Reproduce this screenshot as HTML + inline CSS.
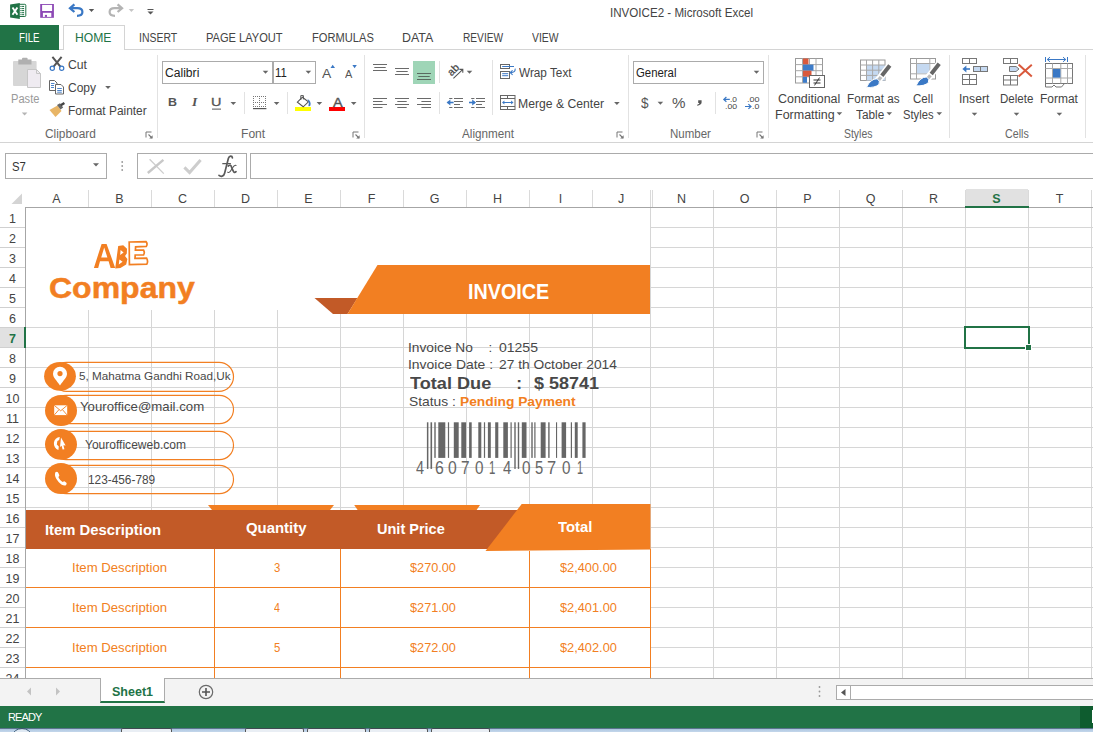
<!DOCTYPE html>
<html><head><meta charset="utf-8"><title>INVOICE2 - Microsoft Excel</title>
<style>
*{box-sizing:border-box;margin:0;padding:0}
html,body{width:1093px;height:732px;overflow:hidden;background:#fff;font-family:"Liberation Sans",sans-serif}
#app{position:relative;width:1093px;height:732px;overflow:hidden;background:#fff;color:#444;font-size:12px}
.a{position:absolute}
.t{position:absolute;white-space:pre;line-height:1;color:#444}
.sep{position:absolute;width:1px;background:#e2e2e2}
.box{position:absolute;border:1px solid #ababab;background:#fff}
svg{position:absolute;overflow:visible}
.ch{position:absolute;top:189px;height:19px;line-height:20px;text-align:center;font-size:12.5px;color:#444}
.rh{position:absolute;left:0;width:25px;height:20px;line-height:23px;text-align:center;font-size:12.5px;color:#444}

</style></head><body><div id="app">
<svg class="a" style="left:0;top:0" width="1093" height="150" viewBox="0 0 1093 150"><rect x="18" y="4.3" width="7.8" height="12.2" rx="1" fill="#fff" stroke="#217346" stroke-width="1"/><rect x="20.4" y="5.9" width="1.2" height="1.1" fill="#217346"/><rect x="22.1" y="5.9" width="2" height="1.1" fill="#217346"/><rect x="20.4" y="8.0" width="1.2" height="1.1" fill="#217346"/><rect x="22.1" y="8.0" width="2" height="1.1" fill="#217346"/><rect x="20.4" y="10.0" width="1.2" height="1.1" fill="#217346"/><rect x="22.1" y="10.0" width="2" height="1.1" fill="#217346"/><rect x="20.4" y="12.1" width="1.2" height="1.1" fill="#217346"/><rect x="22.1" y="12.1" width="2" height="1.1" fill="#217346"/><rect x="20.4" y="14.1" width="1.2" height="1.1" fill="#217346"/><rect x="22.1" y="14.1" width="2" height="1.1" fill="#217346"/><polygon points="10.1,4.6 19.8,3 19.8,18.9 10.1,17.6" fill="#217346"/><path d="M12.5 7.4 L17.4 14.8 M17.4 7.4 L12.5 14.8" stroke="#fff" stroke-width="1.9" fill="none"/><rect x="40.2" y="4" width="13.7" height="13.8" fill="#8c48b5"/><rect x="42.1" y="4.9" width="10" height="6.1" fill="#fff"/><rect x="42.9" y="12.8" width="8.4" height="4.1" fill="#fff"/><rect x="44.9" y="14.9" width="2.1" height="2" fill="#8c48b5"/><path d="M74.4 4.4 L70 8.2 L74.4 12" fill="none" stroke="#3a78c5" stroke-width="2.3" stroke-linejoin="miter"/><path d="M70.6 8.2 H77.4 C80.6 8.2 82.4 10 82.4 12 C82.4 14.4 80.4 15.8 77 15.8" fill="none" stroke="#3a78c5" stroke-width="2.2"/><polygon points="88.8,9.0 94.2,9.0 91.5,12.0" fill="#555"/><path d="M117.6 4.4 L122 8.2 L117.6 12" fill="none" stroke="#b4b4b4" stroke-width="2.3" stroke-linejoin="miter"/><path d="M121.4 8.2 H114.6 C111.4 8.2 109.6 10 109.6 12 C109.6 14.4 111.6 15.8 115 15.8" fill="none" stroke="#b4b4b4" stroke-width="2.2"/><polygon points="128.7,9.0 134.1,9.0 131.4,12.0" fill="#c6c6c6"/><rect x="147.5" y="9" width="6" height="1" fill="#555"/><polygon points="147.5,11.5 153.5,11.5 150.5,14.5" fill="#555"/></svg><div class="t" style="left:610.03px;top:7.00px;font-size:12px;color:#444;transform:scaleX(0.9663);transform-origin:0 0">INVOICE2 - Microsoft Excel</div>
<div class="a" style="left:0;top:25px;width:59px;height:25px;background:#217346"></div>
<div class="a" style="left:59px;top:49px;width:1034px;height:1px;background:#d4d4d4"></div>
<div class="a" style="left:63px;top:25px;width:62px;height:25px;background:#fff;border:1px solid #d4d4d4;border-bottom:0"></div>
<div class="t" style="left:19.20px;top:32.00px;font-size:12px;color:#fff;transform:scaleX(0.8094);transform-origin:0 0">FILE</div>
<div class="t" style="left:75.30px;top:32.00px;font-size:12px;color:#217346;transform:scaleX(1.0116);transform-origin:0 0">HOME</div>
<div class="t" style="left:139.03px;top:32.00px;font-size:12px;color:#444;transform:scaleX(0.8724);transform-origin:0 0">INSERT</div>
<div class="t" style="left:206.29px;top:32.00px;font-size:12px;color:#444;transform:scaleX(0.9245);transform-origin:0 0">PAGE LAYOUT</div>
<div class="t" style="left:312.39px;top:32.00px;font-size:12px;color:#444;transform:scaleX(0.9271);transform-origin:0 0">FORMULAS</div>
<div class="t" style="left:402.38px;top:32.00px;font-size:12px;color:#444;transform:scaleX(1.0333);transform-origin:0 0">DATA</div>
<div class="t" style="left:462.67px;top:32.00px;font-size:12px;color:#444;transform:scaleX(0.8463);transform-origin:0 0">REVIEW</div>
<div class="t" style="left:532.05px;top:32.00px;font-size:12px;color:#444;transform:scaleX(0.8634);transform-origin:0 0">VIEW</div>
<div class="a" style="left:0;top:142px;width:1093px;height:1px;background:#d4d4d4"></div>
<div class="sep" style="left:157px;top:55px;height:83px"></div>
<div class="sep" style="left:364px;top:55px;height:83px"></div>
<div class="sep" style="left:492px;top:60px;height:55px"></div>
<div class="sep" style="left:628px;top:55px;height:83px"></div>
<div class="sep" style="left:768px;top:55px;height:83px"></div>
<div class="sep" style="left:949px;top:55px;height:83px"></div>
<div class="sep" style="left:1085px;top:55px;height:83px"></div>
<div class="sep" style="left:244px;top:92px;height:22px"></div>
<div class="sep" style="left:287px;top:92px;height:22px"></div>
<div class="sep" style="left:439px;top:61px;height:22px"></div>
<div class="sep" style="left:439px;top:92px;height:22px"></div>
<div class="sep" style="left:715px;top:92px;height:22px"></div>
<div class="box" style="left:162px;top:61px;width:111px;height:23px"></div>
<div class="box" style="left:273px;top:61px;width:43px;height:23px"></div>
<div class="box" style="left:633px;top:61px;width:131px;height:23px"></div>
<div class="a" style="left:413px;top:61px;width:22px;height:23px;background:#9fd5b7"></div>
<svg class="a" style="left:0;top:0" width="1093" height="150" viewBox="0 0 1093 150"><rect x="13" y="61" width="23.6" height="25" rx="1" fill="#d6d6d6"/><rect x="18.3" y="59.5" width="13.2" height="5" fill="#b0b0b0"/><rect x="22" y="57.8" width="5.6" height="3" rx="1" fill="#b0b0b0"/><path d="M27.5 69.5 H36.5 L40.5 73.5 V87.5 H27.5 Z" fill="#efebf1" stroke="#c6c6c6" stroke-width="1"/><path d="M36.5 69.5 V73.5 H40.5" fill="none" stroke="#c6c6c6"/><polygon points="21.8,112.5 27.4,112.5 24.6,115.5" fill="#b5b5b5"/><path d="M52.4 56.8 L60.6 66.8 M61.6 56.8 L53.4 66.8" stroke="#555" stroke-width="2" fill="none"/><circle cx="52.3" cy="68.3" r="2.1" fill="none" stroke="#3a78c5" stroke-width="1.2"/><circle cx="61.7" cy="68.3" r="2.1" fill="none" stroke="#3a78c5" stroke-width="1.2"/><path d="M49.5 80.5 H54.5 L57 83 V90.5 H49.5 Z" fill="#fff" stroke="#666"/><path d="M55.5 84.5 H61 L63.5 87 V94 H55.5 Z" fill="#fff" stroke="#666"/><path d="M51 83.5h3.5M51 85.5h3M51 87.5h3M57.2 88.5h4.6M57.2 90.5h4.6M57.2 92.2h4.6" stroke="#3a78c5" stroke-width="0.9"/><polygon points="105.2,86.0 110.8,86.0 108.0,89.0" fill="#666"/><polygon points="49.5,110 57.5,105.5 61.5,111 55.5,117" fill="#e8b566"/><polygon points="57,105 60,103.2 63.2,107.6 60.5,109.6" fill="#666"/><path d="M60.8 105.3 L64.4 103" stroke="#444" stroke-width="2.4"/><path d="M146,137.5 V132 H151.5" fill="none" stroke="#777" stroke-width="1"/><path d="M148.5,134.5 L152,138" stroke="#777" stroke-width="1.1"/><polygon points="152.6,135.2 152.6,138.6 149.2,138.6" fill="#777"/><polygon points="262.7,70.7 268.3,70.7 265.5,73.7" fill="#666"/><polygon points="305.6,70.7 311.2,70.7 308.4,73.7" fill="#666"/><polygon points="330.5,68 335,68 332.7,64.8" fill="#3a78c5"/><polygon points="352.4,65 356.8,65 354.6,68.2" fill="#3a78c5"/><polygon points="230.5,102.1 236.1,102.1 233.3,105.1" fill="#666"/><polygon points="273.8,102.1 279.4,102.1 276.6,105.1" fill="#666"/><polygon points="316.6,102.1 322.2,102.1 319.4,105.1" fill="#666"/><polygon points="350.9,102.1 356.5,102.1 353.7,105.1" fill="#666"/><rect x="212" y="108.6" width="9" height="1" fill="#555"/><g fill="#777" shape-rendering="crispEdges"><rect x="253" y="96" width="1" height="1"/><rect x="253" y="102" width="1" height="1"/><rect x="253" y="106" width="1" height="1"/><rect x="255" y="96" width="1" height="1"/><rect x="255" y="102" width="1" height="1"/><rect x="255" y="106" width="1" height="1"/><rect x="257" y="96" width="1" height="1"/><rect x="257" y="102" width="1" height="1"/><rect x="257" y="106" width="1" height="1"/><rect x="259" y="96" width="1" height="1"/><rect x="259" y="102" width="1" height="1"/><rect x="259" y="106" width="1" height="1"/><rect x="261" y="96" width="1" height="1"/><rect x="261" y="102" width="1" height="1"/><rect x="261" y="106" width="1" height="1"/><rect x="263" y="96" width="1" height="1"/><rect x="263" y="102" width="1" height="1"/><rect x="263" y="106" width="1" height="1"/><rect x="265" y="96" width="1" height="1"/><rect x="265" y="102" width="1" height="1"/><rect x="265" y="106" width="1" height="1"/><rect x="253" y="96" width="1" height="1"/><rect x="259" y="96" width="1" height="1"/><rect x="265" y="96" width="1" height="1"/><rect x="253" y="98" width="1" height="1"/><rect x="259" y="98" width="1" height="1"/><rect x="265" y="98" width="1" height="1"/><rect x="253" y="100" width="1" height="1"/><rect x="259" y="100" width="1" height="1"/><rect x="265" y="100" width="1" height="1"/><rect x="253" y="102" width="1" height="1"/><rect x="259" y="102" width="1" height="1"/><rect x="265" y="102" width="1" height="1"/><rect x="253" y="104" width="1" height="1"/><rect x="259" y="104" width="1" height="1"/><rect x="265" y="104" width="1" height="1"/><rect x="253" y="106" width="1" height="1"/><rect x="259" y="106" width="1" height="1"/><rect x="265" y="106" width="1" height="1"/></g><rect x="253" y="108" width="13.4" height="1.2" fill="#555"/><rect x="295" y="107" width="16" height="4" fill="#ffff00"/><polygon points="297.4,102.2 302.4,97.2 308.4,101.8 303.2,106.8" fill="#fff" stroke="#555" stroke-width="1.1"/><path d="M300.8 100 V95.6 H303.4 V99.4" fill="none" stroke="#555" stroke-width="1"/><path d="M307.6 99 Q311.4 101 310.4 105.6 Q309.4 106.8 308.4 106 Q309.4 102.6 307.6 99 Z" fill="#3a78c5"/><rect x="329" y="107" width="16" height="4" fill="#ff0000"/><path d="M353,137.5 V132 H358.5" fill="none" stroke="#777" stroke-width="1"/><path d="M355.5,134.5 L359,138" stroke="#777" stroke-width="1.1"/><polygon points="359.6,135.2 359.6,138.6 356.2,138.6" fill="#777"/><rect x="373.0" y="64" width="14.0" height="1" fill="#6a6a6a"/><rect x="374.3" y="67" width="11.4" height="1" fill="#6a6a6a"/><rect x="373.0" y="70" width="14.0" height="1" fill="#6a6a6a"/><rect x="395.0" y="68" width="14.0" height="1" fill="#6a6a6a"/><rect x="396.3" y="71" width="11.4" height="1" fill="#6a6a6a"/><rect x="395.0" y="74" width="14.0" height="1" fill="#6a6a6a"/><rect x="417.0" y="73" width="14.0" height="1" fill="#5a6a60"/><rect x="418.3" y="76" width="11.4" height="1" fill="#5a6a60"/><rect x="417.0" y="79" width="14.0" height="1" fill="#5a6a60"/><rect x="373.0" y="98" width="14.0" height="1" fill="#6a6a6a"/><rect x="395.0" y="98" width="14.0" height="1" fill="#6a6a6a"/><rect x="417.0" y="98" width="14.0" height="1" fill="#6a6a6a"/><rect x="449.2" y="98" width="3.2" height="1" fill="#6a6a6a"/><rect x="454.0" y="98" width="9.0" height="1" fill="#6a6a6a"/><rect x="471.2" y="98" width="3.2" height="1" fill="#6a6a6a"/><rect x="476.0" y="98" width="9.0" height="1" fill="#6a6a6a"/><rect x="373.0" y="101" width="9.5" height="1" fill="#6a6a6a"/><rect x="397.3" y="101" width="9.4" height="1" fill="#6a6a6a"/><rect x="421.4" y="101" width="9.6" height="1" fill="#6a6a6a"/><rect x="454.0" y="101" width="9.0" height="1" fill="#6a6a6a"/><rect x="476.0" y="101" width="9.0" height="1" fill="#6a6a6a"/><rect x="373.0" y="104" width="14.0" height="1" fill="#6a6a6a"/><rect x="395.0" y="104" width="14.0" height="1" fill="#6a6a6a"/><rect x="417.0" y="104" width="14.0" height="1" fill="#6a6a6a"/><rect x="454.0" y="104" width="6.0" height="1" fill="#6a6a6a"/><rect x="476.0" y="104" width="6.0" height="1" fill="#6a6a6a"/><rect x="373.0" y="107" width="9.5" height="1" fill="#6a6a6a"/><rect x="397.3" y="107" width="9.4" height="1" fill="#6a6a6a"/><rect x="421.4" y="107" width="9.6" height="1" fill="#6a6a6a"/><rect x="449.2" y="107" width="3.2" height="1" fill="#6a6a6a"/><rect x="454.0" y="107" width="9.0" height="1" fill="#6a6a6a"/><rect x="471.2" y="107" width="3.2" height="1" fill="#6a6a6a"/><rect x="476.0" y="107" width="9.0" height="1" fill="#6a6a6a"/><path d="M447.6 102.5 H453.6" stroke="#3a78c5" stroke-width="1.6"/><polygon points="446.6,102.5 450.4,99.4 450.4,105.6" fill="#3a78c5"/><path d="M469 102.5 H475" stroke="#3a78c5" stroke-width="1.6"/><polygon points="476,102.5 472.2,99.4 472.2,105.6" fill="#3a78c5"/><path d="M453.4 78.4 L462.6 69.6 M459.4 69.4 L462.8 69.4 L462.8 72.8" stroke="#555" stroke-width="1.1" fill="none"/><text transform="translate(451.6,76.4) rotate(-45)" font-size="10.5" fill="#444" stroke="#444" stroke-width="0.25" font-family="Liberation Sans">ab</text><polygon points="466.7,70.7 472.3,70.7 469.5,73.7" fill="#666"/><rect x="500.5" y="64.5" width="9" height="4" fill="#fff" stroke="#666"/><rect x="500.5" y="71.5" width="9" height="7" fill="#fff" stroke="#666"/><path d="M502.2 66.5 H514 M502.2 73.7 H508.2 M502.2 75.7 H508.2" stroke="#3a78c5" stroke-width="1" fill="none"/><path d="M515.2 68.6 C515.4 71.4 513.6 72.6 511 72.6" fill="none" stroke="#3a78c5" stroke-width="1.1"/><path d="M512.6 70.4 L510.2 72.6 L512.6 74.8" fill="none" stroke="#3a78c5" stroke-width="1.1"/><rect x="500.5" y="95.5" width="14.5" height="14" fill="#fff" stroke="#666"/><path d="M500.5 98.5 H515 M500.5 106.5 H515 M507.5 95.5 V98.5 M507.5 106.5 V109.5" stroke="#666" fill="none"/><path d="M503 102.5 H512.5" stroke="#3a78c5" stroke-width="1"/><polygon points="502,102.5 504.4,100.6 504.4,104.4" fill="#3a78c5"/><polygon points="513.5,102.5 511.1,100.6 511.1,104.4" fill="#3a78c5"/><polygon points="614.1,101.9 619.7,101.9 616.9,104.9" fill="#666"/><path d="M617,137.5 V132 H622.5" fill="none" stroke="#777" stroke-width="1"/><path d="M619.5,134.5 L623,138" stroke="#777" stroke-width="1.1"/><polygon points="623.6,135.2 623.6,138.6 620.2,138.6" fill="#777"/><polygon points="753.7,70.8 759.3,70.8 756.5,73.8" fill="#666"/><polygon points="657.6,101.7 663.2,101.7 660.4,104.7" fill="#666"/><path d="M724 99.4 H729.8 M726.4 97 L723.8 99.4 L726.4 101.8" stroke="#3a78c5" stroke-width="1.2" fill="none"/><path d="M745 106.5 H750.8 M748.4 104.1 L751 106.5 L748.4 108.9" stroke="#3a78c5" stroke-width="1.2" fill="none"/><path d="M757,137.5 V132 H762.5" fill="none" stroke="#777" stroke-width="1"/><path d="M759.5,134.5 L763,138" stroke="#777" stroke-width="1.1"/><polygon points="763.6,135.2 763.6,138.6 760.2,138.6" fill="#777"/><path d="M698.2 100.2 H701.6 V102.6 Q701.4 105.2 697.2 105.8 V104.8 Q699.4 104.2 699.4 103 H698.2 Z" fill="#555"/><rect x="795.5" y="58.5" width="27" height="24.5" fill="#fff" stroke="#9a9a9a"/><path d="M795.5 64.6 H822.5 M795.5 70.7 H822.5 M795.5 76.8 H822.5 M802.5 58.5 V83 M809.5 58.5 V83 M816 58.5 V83" stroke="#a8a8a8" stroke-width="1" fill="none"/><rect x="803" y="58.5" width="5.5" height="6" fill="#d9593c"/><rect x="803" y="64.6" width="10.5" height="6" fill="#3d7cc9"/><rect x="803" y="70.7" width="8.5" height="6" fill="#d9593c"/><rect x="803" y="76.8" width="4" height="6" fill="#3d7cc9"/><rect x="809.5" y="75.5" width="15" height="12" fill="#fff" stroke="#666"/><path d="M813.5 80 H820.5 M813.5 83 H820.5 M819.5 77.6 L814.5 85.4" stroke="#333" stroke-width="1" fill="none"/><polygon points="836.6,112.2 842.2,112.2 839.4,115.2" fill="#666"/><rect x="860.5" y="60" width="24.5" height="20.5" fill="#fff" stroke="#9a9a9a"/><rect x="866.5" y="65" width="18.5" height="15.5" fill="#c5d9f1"/><path d="M860.5 65 H885 M860.5 70.2 H885 M860.5 75.4 H885 M866.5 60 V80.5 M872.6 60 V80.5 M878.8 60 V80.5" stroke="#a8a8a8" stroke-width="1" fill="none"/><path d="M890 65.4 L876 83" stroke="#fff" stroke-width="7"/><path d="M889.8 65.6 L881.8 75.8" stroke="#666" stroke-width="4"/><path d="M881 77 L878.6 80" stroke="#bbb" stroke-width="3.4"/><path d="M866.5 87.4 Q870.6 78.6 877.2 78.8 Q880.6 80.8 879 84.4 Q875 88 866.5 87.4 Z" fill="#3a78c5" stroke="#fff" stroke-width="1"/><polygon points="886.5,112.2 892.1,112.2 889.3,115.2" fill="#666"/><rect x="910.5" y="58.5" width="25" height="20.5" fill="#fff" stroke="#9a9a9a"/><path d="M910.5 63.5 H935.5 M910.5 73.8 H935.5 M916.5 58.5 V79 M929.8 58.5 V79" stroke="#a8a8a8" stroke-width="1" fill="none"/><rect x="917" y="64" width="12.3" height="9.3" fill="#c5d9f1"/><path d="M939.4 63.6 L925.4 81.2" stroke="#fff" stroke-width="7"/><path d="M939.2 63.8 L931.2 74" stroke="#666" stroke-width="4"/><path d="M930.4 75.2 L928 78.2" stroke="#bbb" stroke-width="3.4"/><path d="M916 85.8 Q920.2 76.8 926.6 77 Q930 79 928.4 82.6 Q924.4 86.4 916 85.8 Z" fill="#3a78c5" stroke="#fff" stroke-width="1"/><polygon points="936.5,112.2 942.1,112.2 939.3,115.2" fill="#666"/><rect x="962.5" y="58.5" width="14" height="5" fill="#fff" stroke="#777"/><path d="M969.5 58.5 V63.5" stroke="#777"/><rect x="973.5" y="66.5" width="14" height="5" fill="#c5d9f1" stroke="#777"/><path d="M980.5 66.5 V71.5" stroke="#777"/><path d="M964 69 H970" stroke="#3a78c5" stroke-width="1.6"/><polygon points="962.4,69 966.4,65.6 966.4,72.4" fill="#3a78c5"/><rect x="962.5" y="74.5" width="14" height="10" fill="#fff" stroke="#777"/><path d="M969.5 74.5 V84.5 M962.5 79.5 H976.5" stroke="#777"/><polygon points="971.7,112.8 977.3,112.8 974.5,115.8" fill="#666"/><rect x="1003.5" y="58.5" width="14" height="5" fill="#fff" stroke="#777"/><path d="M1010.5 58.5 V63.5" stroke="#777"/><path d="M1009.5 66.5 H1016 L1019 69 L1016 71.5 H1009.5 Z" fill="#c5d9f1" stroke="#777"/><rect x="1003.5" y="75.5" width="14" height="9.5" fill="#fff" stroke="#777"/><path d="M1010.5 75.5 V85 M1003.5 80 H1017.5" stroke="#777"/><path d="M1018.6 64.4 L1031.8 76.6 M1031.8 64.8 L1018.6 76.4" stroke="#d9593c" stroke-width="2"/><polygon points="1013.7,112.8 1019.3,112.8 1016.5,115.8" fill="#666"/><path d="M1045.5 57 V62 M1067.5 57 V62 M1047.5 59.5 H1065.5" stroke="#3a78c5" stroke-width="1" fill="none"/><path d="M1050 57.2 L1047.2 59.5 L1050 61.8 M1063 57.2 L1065.8 59.5 L1063 61.8" stroke="#3a78c5" stroke-width="1" fill="none"/><rect x="1045.5" y="63.5" width="27" height="20" fill="#fff" stroke="#777"/><path d="M1045.5 68.5 H1072.5 M1045.5 78 H1072.5 M1052.5 63.5 V83.5 M1060.8 63.5 V83.5 M1067.5 63.5 V83.5" stroke="#aaa" fill="none"/><rect x="1053" y="69" width="7.4" height="8.6" fill="#3a78c5"/><path d="M1045.5 83.5 V87 H1052 L1054 85 L1056 87 H1061.5 L1064.5 83.5" fill="none" stroke="#777"/><polygon points="1056.6,112.8 1062.2,112.8 1059.4,115.8" fill="#666"/></svg>
<div class="t" style="left:10.99px;top:93.00px;font-size:12px;color:#9a9a9a;transform:scaleX(0.9256);transform-origin:0 0">Paste</div>
<div class="t" style="left:67.88px;top:59.00px;font-size:12px;color:#444;transform:scaleX(1.0172);transform-origin:0 0">Cut</div>
<div class="t" style="left:67.89px;top:82.00px;font-size:12px;color:#444;transform:scaleX(1.0006);transform-origin:0 0">Copy</div>
<div class="t" style="left:67.52px;top:105.00px;font-size:12px;color:#444;transform:scaleX(0.9914);transform-origin:0 0">Format Painter</div>
<div class="t" style="left:45.10px;top:128.00px;font-size:12px;color:#666;transform:scaleX(0.9902);transform-origin:0 0">Clipboard</div>
<div class="t" style="left:165.18px;top:67.00px;font-size:12px;color:#222;transform:scaleX(1.0093);transform-origin:0 0">Calibri</div>
<div class="t" style="left:275.13px;top:67.00px;font-size:12px;color:#222;transform:scaleX(0.9481);transform-origin:0 0">11</div>
<div class="t" style="left:322.17px;top:67.00px;font-size:13px;color:#555;transform:scaleX(1.0671);transform-origin:0 0">A</div>
<div class="t" style="left:344.98px;top:69.00px;font-size:10.5px;color:#555;transform:scaleX(1.0467);transform-origin:0 0">A</div>
<div class="t" style="left:167.57px;top:97.00px;font-size:11.5px;color:#555;font-weight:bold;transform:scaleX(1.0825);transform-origin:0 0">B</div>
<div class="t" style="left:191.93px;top:96.00px;font-size:12px;color:#555;font-weight:bold;font-style:italic;font-family:'Liberation Serif',serif;transform:scaleX(1.1308);transform-origin:0 0">I</div>
<div class="t" style="left:211.29px;top:97.00px;font-size:11.5px;color:#555;transform:scaleX(1.2542);transform-origin:0 0;-webkit-text-stroke:0.3px #555">U</div>
<div class="t" style="left:332.57px;top:96.00px;font-size:13.6px;color:#555;transform:scaleX(1.0637);transform-origin:0 0;-webkit-text-stroke:0.4px #555">A</div>
<div class="t" style="left:240.51px;top:128.00px;font-size:12px;color:#666;transform:scaleX(1.0068);transform-origin:0 0">Font</div>
<div class="t" style="left:519.25px;top:67.00px;font-size:12px;color:#444;transform:scaleX(0.9806);transform-origin:0 0">Wrap Text</div>
<div class="t" style="left:518.30px;top:98.00px;font-size:12px;color:#444;transform:scaleX(1.0153);transform-origin:0 0">Merge &amp; Center</div>
<div class="t" style="left:462.48px;top:128.00px;font-size:12px;color:#666;transform:scaleX(0.9744);transform-origin:0 0">Alignment</div>
<div class="t" style="left:636.13px;top:67.00px;font-size:12px;color:#222;transform:scaleX(0.9468);transform-origin:0 0">General</div>
<div class="t" style="left:640.65px;top:96.00px;font-size:14.5px;color:#555;transform:scaleX(0.9364);transform-origin:0 0">$</div>
<div class="t" style="left:671.76px;top:96.00px;font-size:14px;color:#555;transform:scaleX(1.0825);transform-origin:0 0">%</div>
<div class="t" style="left:730.24px;top:96.00px;font-size:7.5px;color:#444;transform:scaleX(1.1158);transform-origin:0 0">.0</div>
<div class="t" style="left:725.10px;top:103.00px;font-size:7.5px;color:#444;transform:scaleX(1.1628);transform-origin:0 0">.00</div>
<div class="t" style="left:746.97px;top:96.00px;font-size:7.5px;color:#444;transform:scaleX(1.2051);transform-origin:0 0">.00</div>
<div class="t" style="left:752.20px;top:103.00px;font-size:7.5px;color:#444;transform:scaleX(1.1725);transform-origin:0 0">.0</div>
<div class="t" style="left:670.06px;top:128.00px;font-size:12px;color:#666;transform:scaleX(0.9589);transform-origin:0 0">Number</div>
<div class="t" style="left:777.97px;top:93.00px;font-size:12px;color:#444;transform:scaleX(1.0369);transform-origin:0 0">Conditional</div>
<div class="t" style="left:774.77px;top:109.00px;font-size:12px;color:#444;transform:scaleX(1.0413);transform-origin:0 0">Formatting</div>
<div class="t" style="left:846.64px;top:93.00px;font-size:12px;color:#444;transform:scaleX(0.9734);transform-origin:0 0">Format as</div>
<div class="t" style="left:856.34px;top:109.00px;font-size:12px;color:#444;transform:scaleX(0.9826);transform-origin:0 0">Table</div>
<div class="t" style="left:913.01px;top:93.00px;font-size:12px;color:#444;transform:scaleX(0.9657);transform-origin:0 0">Cell</div>
<div class="t" style="left:903.49px;top:109.00px;font-size:12px;color:#444;transform:scaleX(0.9335);transform-origin:0 0">Styles</div>
<div class="t" style="left:844.13px;top:128.00px;font-size:12px;color:#666;transform:scaleX(0.8704);transform-origin:0 0">Styles</div>
<div class="t" style="left:958.78px;top:93.00px;font-size:12px;color:#444;transform:scaleX(1.0097);transform-origin:0 0">Insert</div>
<div class="t" style="left:999.85px;top:93.00px;font-size:12px;color:#444;transform:scaleX(0.9617);transform-origin:0 0">Delete</div>
<div class="t" style="left:1039.92px;top:93.00px;font-size:12px;color:#444;transform:scaleX(0.9961);transform-origin:0 0">Format</div>
<div class="t" style="left:1004.96px;top:128.00px;font-size:12px;color:#666;transform:scaleX(0.8896);transform-origin:0 0">Cells</div>
<div class="box" style="left:5px;top:153px;width:102px;height:26px"></div>
<div class="box" style="left:137px;top:153px;width:110px;height:26px"></div>
<div class="box" style="left:250px;top:153px;width:860px;height:26px"></div>
<svg class="a" style="left:0;top:150px" width="1093" height="40" viewBox="0 150 1093 40"><polygon points="93.0,163.2 99.0,163.2 96.0,166.4" fill="#666"/><circle cx="122.2" cy="162" r="0.9" fill="#999"/><circle cx="122.2" cy="166" r="0.9" fill="#999"/><circle cx="122.2" cy="170" r="0.9" fill="#999"/><path d="M149.6 159.2 L163.8 173.6" stroke="#cdcdcd" stroke-width="1.3" fill="none"/><path d="M163.4 159.8 L147.8 173" stroke="#c8c8c8" stroke-width="2.4" fill="none"/><path d="M184.4 167.4 L189.6 172.6 L200.6 160" stroke="#cdcdcd" stroke-width="3" fill="none"/><g fill="none" stroke="#5a5a5a" stroke-linecap="round"><path d="M232.4 157.8 C232.2 155.6 229.4 155.4 228.4 158.2 L224.6 173.2 C223.8 176.6 220.8 177 219 175.4" stroke-width="1.7"/><path d="M222.8 163.7 H230.4" stroke-width="1.3"/><path d="M228.2 166 C229.8 164.6 231 165.2 231.6 167.2 L233 170.6 C233.6 172.6 234.8 173 236 171.6" stroke-width="1.7"/><path d="M236 165.4 C234.6 164.6 233.6 166 232.4 168 L231.2 170 C230 172 229 173 227.8 172.2" stroke-width="1.1"/></g></svg>
<div class="t" style="left:12.28px;top:161.00px;font-size:12px;color:#333;transform:scaleX(0.9454);transform-origin:0 0">S7</div>
<div class="a" id="grid" style="left:0;top:188px;width:1093px;height:490px;background:#fff;overflow:hidden"></div>
<svg class="a" style="left:0;top:0" width="1093" height="732" shape-rendering="crispEdges"><rect x="26" y="227" width="1067" height="1" fill="#d6d6d6"/><rect x="0" y="227" width="25" height="1" fill="#d0d0d0"/><rect x="26" y="247" width="1067" height="1" fill="#d6d6d6"/><rect x="0" y="247" width="25" height="1" fill="#d0d0d0"/><rect x="26" y="267" width="1067" height="1" fill="#d6d6d6"/><rect x="0" y="267" width="25" height="1" fill="#d0d0d0"/><rect x="26" y="287" width="1067" height="1" fill="#d6d6d6"/><rect x="0" y="287" width="25" height="1" fill="#d0d0d0"/><rect x="26" y="307" width="1067" height="1" fill="#d6d6d6"/><rect x="0" y="307" width="25" height="1" fill="#d0d0d0"/><rect x="26" y="327" width="1067" height="1" fill="#d6d6d6"/><rect x="0" y="327" width="25" height="1" fill="#d0d0d0"/><rect x="26" y="347" width="1067" height="1" fill="#d6d6d6"/><rect x="0" y="347" width="25" height="1" fill="#d0d0d0"/><rect x="26" y="367" width="1067" height="1" fill="#d6d6d6"/><rect x="0" y="367" width="25" height="1" fill="#d0d0d0"/><rect x="26" y="387" width="1067" height="1" fill="#d6d6d6"/><rect x="0" y="387" width="25" height="1" fill="#d0d0d0"/><rect x="26" y="407" width="1067" height="1" fill="#d6d6d6"/><rect x="0" y="407" width="25" height="1" fill="#d0d0d0"/><rect x="26" y="427" width="1067" height="1" fill="#d6d6d6"/><rect x="0" y="427" width="25" height="1" fill="#d0d0d0"/><rect x="26" y="447" width="1067" height="1" fill="#d6d6d6"/><rect x="0" y="447" width="25" height="1" fill="#d0d0d0"/><rect x="26" y="467" width="1067" height="1" fill="#d6d6d6"/><rect x="0" y="467" width="25" height="1" fill="#d0d0d0"/><rect x="26" y="487" width="1067" height="1" fill="#d6d6d6"/><rect x="0" y="487" width="25" height="1" fill="#d0d0d0"/><rect x="26" y="507" width="1067" height="1" fill="#d6d6d6"/><rect x="0" y="507" width="25" height="1" fill="#d0d0d0"/><rect x="26" y="527" width="1067" height="1" fill="#d6d6d6"/><rect x="0" y="527" width="25" height="1" fill="#d0d0d0"/><rect x="26" y="547" width="1067" height="1" fill="#d6d6d6"/><rect x="0" y="547" width="25" height="1" fill="#d0d0d0"/><rect x="26" y="567" width="1067" height="1" fill="#d6d6d6"/><rect x="0" y="567" width="25" height="1" fill="#d0d0d0"/><rect x="26" y="587" width="1067" height="1" fill="#d6d6d6"/><rect x="0" y="587" width="25" height="1" fill="#d0d0d0"/><rect x="26" y="607" width="1067" height="1" fill="#d6d6d6"/><rect x="0" y="607" width="25" height="1" fill="#d0d0d0"/><rect x="26" y="627" width="1067" height="1" fill="#d6d6d6"/><rect x="0" y="627" width="25" height="1" fill="#d0d0d0"/><rect x="26" y="647" width="1067" height="1" fill="#d6d6d6"/><rect x="0" y="647" width="25" height="1" fill="#d0d0d0"/><rect x="26" y="667" width="1067" height="1" fill="#d6d6d6"/><rect x="0" y="667" width="25" height="1" fill="#d0d0d0"/><rect x="88" y="208" width="1" height="470" fill="#d6d6d6"/><rect x="88" y="190" width="1" height="17" fill="#dadada"/><rect x="151" y="208" width="1" height="470" fill="#d6d6d6"/><rect x="151" y="190" width="1" height="17" fill="#dadada"/><rect x="214" y="208" width="1" height="470" fill="#d6d6d6"/><rect x="214" y="190" width="1" height="17" fill="#dadada"/><rect x="277" y="208" width="1" height="470" fill="#d6d6d6"/><rect x="277" y="190" width="1" height="17" fill="#dadada"/><rect x="340" y="208" width="1" height="470" fill="#d6d6d6"/><rect x="340" y="190" width="1" height="17" fill="#dadada"/><rect x="403" y="208" width="1" height="470" fill="#d6d6d6"/><rect x="403" y="190" width="1" height="17" fill="#dadada"/><rect x="466" y="208" width="1" height="470" fill="#d6d6d6"/><rect x="466" y="190" width="1" height="17" fill="#dadada"/><rect x="529" y="208" width="1" height="470" fill="#d6d6d6"/><rect x="529" y="190" width="1" height="17" fill="#dadada"/><rect x="592" y="208" width="1" height="470" fill="#d6d6d6"/><rect x="592" y="190" width="1" height="17" fill="#dadada"/><rect x="650" y="208" width="1" height="470" fill="#d6d6d6"/><rect x="650" y="190" width="1" height="17" fill="#dadada"/><rect x="713" y="208" width="1" height="470" fill="#d6d6d6"/><rect x="713" y="190" width="1" height="17" fill="#dadada"/><rect x="776" y="208" width="1" height="470" fill="#d6d6d6"/><rect x="776" y="190" width="1" height="17" fill="#dadada"/><rect x="839" y="208" width="1" height="470" fill="#d6d6d6"/><rect x="839" y="190" width="1" height="17" fill="#dadada"/><rect x="902" y="208" width="1" height="470" fill="#d6d6d6"/><rect x="902" y="190" width="1" height="17" fill="#dadada"/><rect x="965" y="208" width="1" height="470" fill="#d6d6d6"/><rect x="965" y="190" width="1" height="17" fill="#dadada"/><rect x="1028" y="208" width="1" height="470" fill="#d6d6d6"/><rect x="1028" y="190" width="1" height="17" fill="#dadada"/><rect x="1091" y="208" width="1" height="470" fill="#d6d6d6"/><rect x="1091" y="190" width="1" height="17" fill="#dadada"/><rect x="652" y="190" width="1" height="17" fill="#dadada"/><rect x="25" y="207" width="1068" height="1" fill="#a6a6a6"/><rect x="25" y="207" width="1" height="471" fill="#a6a6a6"/><polygon points="22,193.5 22,204 11.5,204" fill="#d4d4d4" shape-rendering="auto"/></svg>
<div class="ch" style="left:25px;width:63px">A</div>
<div class="ch" style="left:88px;width:63px">B</div>
<div class="ch" style="left:151px;width:63px">C</div>
<div class="ch" style="left:214px;width:63px">D</div>
<div class="ch" style="left:277px;width:63px">E</div>
<div class="ch" style="left:340px;width:63px">F</div>
<div class="ch" style="left:403px;width:63px">G</div>
<div class="ch" style="left:466px;width:63px">H</div>
<div class="ch" style="left:529px;width:63px">I</div>
<div class="ch" style="left:592px;width:58px">J</div>
<div class="ch" style="left:650px;width:63px">N</div>
<div class="ch" style="left:713px;width:63px">O</div>
<div class="ch" style="left:776px;width:63px">P</div>
<div class="ch" style="left:839px;width:63px">Q</div>
<div class="ch" style="left:902px;width:63px">R</div>
<div class="a" style="left:966px;top:189px;width:62px;height:18px;background:#e1e1e1"></div><div class="a" style="left:965px;top:206px;width:64px;height:2px;background:#217346"></div>
<div class="ch" style="left:965px;width:63px;color:#217346;font-weight:bold">S</div>
<div class="ch" style="left:1028px;width:63px">T</div>
<div class="rh" style="top:208px">1</div>
<div class="rh" style="top:228px">2</div>
<div class="rh" style="top:248px">3</div>
<div class="rh" style="top:268px">4</div>
<div class="rh" style="top:288px">5</div>
<div class="rh" style="top:308px">6</div>
<div class="a" style="left:0;top:328px;width:24px;height:19px;background:#e1e1e1"></div><div class="a" style="left:24px;top:327px;width:2px;height:21px;background:#217346"></div>
<div class="rh" style="top:328px;color:#217346;font-weight:bold">7</div>
<div class="rh" style="top:348px">8</div>
<div class="rh" style="top:368px">9</div>
<div class="rh" style="top:388px">10</div>
<div class="rh" style="top:408px">11</div>
<div class="rh" style="top:428px">12</div>
<div class="rh" style="top:448px">13</div>
<div class="rh" style="top:468px">14</div>
<div class="rh" style="top:488px">15</div>
<div class="rh" style="top:508px">16</div>
<div class="rh" style="top:528px">17</div>
<div class="rh" style="top:548px">18</div>
<div class="rh" style="top:568px">19</div>
<div class="rh" style="top:588px">20</div>
<div class="rh" style="top:608px">21</div>
<div class="rh" style="top:628px">22</div>
<div class="rh" style="top:648px">23</div>
<div class="rh" style="top:668px">24</div>
<div class="a" style="left:26px;top:208px;width:624px;height:102px;background:#fff"></div>
<div class="a" style="left:26px;top:549px;width:624px;height:129px;background:#fff"></div>
<svg class="a" style="left:0;top:0" width="1093" height="732" viewBox="0 0 1093 732"><polygon points="314.5,298 357.5,298 347.5,314 333,314" fill="#c25a27"/><polygon points="377.5,265 650,265 650,314 347.5,314" fill="#f27f22"/><path fill-rule="evenodd" d="M93.9 267.9 L101.6 243.9 L106.6 243.9 L115.2 267.9 L110.6 267.9 L108.6 261.2 L100 261.2 L98.2 267.9 Z M101.2 257.4 L107.4 257.4 L104.2 247.6 Z" fill="#f27f22"/><path fill-rule="evenodd" d="M118.2 246 L123.2 245.3 L127 248.8 L126.8 253.6 L125 256 L127.4 259 L126.2 264.6 L120.4 268 L115.2 268.4 Z M120.6 250 L123.6 252.4 L120.2 255 Z M119.4 259.4 L122.6 261.8 L118.8 264.4 Z" fill="#f27f22"/><path d="M129.2 242 L146 241.6 Q148 244 146.2 246.4 L135.6 246.8 L135.4 250.2 L143.6 250.2 Q145 252.6 143.6 254.8 L135.2 255 L135 258.4 L146.6 258.2 Q148.4 261.4 146.8 264.2 L129.4 264.6 Z" fill="#fff" stroke="#f27f22" stroke-width="1.7"/><rect x="52" y="362.3" width="181.5" height="29.0" rx="14.5" fill="none" stroke="#f27f22" stroke-width="1.2"/><rect x="52" y="395.3" width="181.5" height="28.3" rx="14.2" fill="none" stroke="#f27f22" stroke-width="1.2"/><rect x="52" y="431.3" width="181.5" height="28.3" rx="14.2" fill="none" stroke="#f27f22" stroke-width="1.2"/><rect x="52" y="465.3" width="181.5" height="28.3" rx="14.2" fill="none" stroke="#f27f22" stroke-width="1.2"/><ellipse cx="60" cy="376.3" rx="15.9" ry="14.4" fill="#f27f22"/><ellipse cx="61" cy="410.5" rx="16" ry="15.4" fill="#f27f22"/><ellipse cx="61" cy="444.3" rx="16" ry="15.4" fill="#f27f22"/><ellipse cx="61" cy="478.5" rx="16" ry="15.4" fill="#f27f22"/><path fill-rule="evenodd" d="M60 385.6 C56.4 380 53 377.6 53 373.8 A7 7 0 0 1 67 373.8 C67 377.6 63.6 380 60 385.6 Z M60 371 A2.6 2.6 0 1 0 60 376.2 A2.6 2.6 0 1 0 60 371 Z" fill="#fff"/><rect x="54.2" y="405.3" width="13" height="9.8" fill="#fff"/><path d="M54.2 405.3 L60.7 410.8 L67.2 405.3 M54.2 415.1 L59 409.6 M67.2 415.1 L62.4 409.6" stroke="#f27f22" stroke-width="0.9" fill="none"/><path d="M59.8 437 A6 6.6 0 0 0 58.4 450 L58.8 446.4 L56.8 444.6 L57.4 441 L59.2 440 Z" fill="#fff"/><path d="M61 437.4 L65.6 445.4 L63.4 445.2 L64.4 449.2 L62.6 449.6 L61.6 445.8 L60 447 Z" fill="#fff"/><path d="M55.2 472.6 Q57.6 470.8 58.6 473.4 L59.4 475.6 Q58.2 476.8 58.6 477.8 Q60.2 480.8 62.6 482 Q63.6 481.4 64.4 481.2 L66.4 482.8 Q67.4 484.2 65.6 485.4 Q62.6 486.2 58.6 482 Q54 477 55.2 472.6 Z" fill="#fff"/><rect x="426.9" y="422.3" width="1.5" height="46.6" fill="#666"/><rect x="430.5" y="422.3" width="1.6" height="46.6" fill="#666"/><rect x="514.3" y="422.3" width="1.4" height="46.6" fill="#666"/><rect x="517.8" y="422.3" width="1.4" height="46.6" fill="#666"/><rect x="434.3" y="422.3" width="1.4" height="35.6" fill="#666"/><rect x="438.3" y="422.3" width="7.0" height="35.6" fill="#666"/><rect x="447.9" y="422.3" width="1.2" height="35.6" fill="#666"/><rect x="453.8" y="422.3" width="4.9" height="35.6" fill="#666"/><rect x="461.3" y="422.3" width="4.8" height="35.6" fill="#666"/><rect x="469.1" y="422.3" width="2.6" height="35.6" fill="#666"/><rect x="478.3" y="422.3" width="3.0" height="35.6" fill="#666"/><rect x="483.9" y="422.3" width="1.2" height="35.6" fill="#666"/><rect x="487.9" y="422.3" width="2.9" height="35.6" fill="#666"/><rect x="495.2" y="422.3" width="3.1" height="35.6" fill="#666"/><rect x="503.3" y="422.3" width="4.6" height="35.6" fill="#666"/><rect x="510.5" y="422.3" width="1.2" height="35.6" fill="#666"/><rect x="521.8" y="422.3" width="4.7" height="35.6" fill="#666"/><rect x="531.3" y="422.3" width="1.4" height="35.6" fill="#666"/><rect x="534.3" y="422.3" width="1.2" height="35.6" fill="#666"/><rect x="540.7" y="422.3" width="4.9" height="35.6" fill="#666"/><rect x="548.2" y="422.3" width="1.4" height="35.6" fill="#666"/><rect x="556" y="422.3" width="1.1" height="35.6" fill="#666"/><rect x="561.6" y="422.3" width="4.5" height="35.6" fill="#666"/><rect x="570.8" y="422.3" width="1.2" height="35.6" fill="#666"/><rect x="574.8" y="422.3" width="2.9" height="35.6" fill="#666"/><rect x="582.4" y="422.3" width="3.2" height="35.6" fill="#666"/><rect x="26" y="510" width="500" height="39" fill="#c25a27"/><polygon points="208,505 334,505 330,510 212,510" fill="#f27f22"/><polygon points="354.2,505 480,505 476.6,510 357.6,510" fill="#f27f22"/><polygon points="521.7,504 650.5,504 650.5,549.4 485.5,551" fill="#f27f22"/><rect x="26" y="587" width="625" height="1" fill="#f27f22" shape-rendering="crispEdges"/><rect x="26" y="627" width="625" height="1" fill="#f27f22" shape-rendering="crispEdges"/><rect x="26" y="667" width="625" height="1" fill="#f27f22" shape-rendering="crispEdges"/><rect x="214" y="549" width="1" height="129" fill="#f27f22" shape-rendering="crispEdges"/><rect x="340" y="549" width="1" height="129" fill="#f27f22" shape-rendering="crispEdges"/><rect x="529" y="551" width="1" height="127" fill="#f27f22" shape-rendering="crispEdges"/><rect x="650" y="549" width="1" height="129" fill="#f27f22" shape-rendering="crispEdges"/></svg>
<div class="t" style="left:48.59px;top:273.00px;font-size:30px;color:#f27f22;font-weight:bold;transform:scaleX(1.0666);transform-origin:0 0;-webkit-text-stroke:0.5px #f27f22">Company</div>
<div class="t" style="left:467.58px;top:281.00px;font-size:21.2px;color:#fff;font-weight:bold;transform:scaleX(0.9331);transform-origin:0 0">INVOICE</div>
<div class="t" style="left:408.23px;top:341.00px;font-size:13.33px;color:#484848;transform:scaleX(1.0311);transform-origin:0 0">Invoice No</div>
<div class="t" style="left:488.38px;top:341.00px;font-size:13.33px;color:#484848">:</div>
<div class="t" style="left:499.45px;top:341.00px;font-size:13.33px;color:#484848;transform:scaleX(1.0505);transform-origin:0 0">01255</div>
<div class="t" style="left:408.22px;top:358.00px;font-size:13.33px;color:#484848;transform:scaleX(1.0436);transform-origin:0 0">Invoice Date :</div>
<div class="t" style="left:499.31px;top:358.00px;font-size:13.33px;color:#484848;transform:scaleX(1.0332);transform-origin:0 0">27 th October 2014</div>
<div class="t" style="left:410.30px;top:375.00px;font-size:17.33px;color:#484848;font-weight:bold;transform:scaleX(1.0459);transform-origin:0 0">Total Due</div>
<div class="t" style="left:516.33px;top:375.00px;font-size:17.33px;color:#484848;font-weight:bold">:</div>
<div class="t" style="left:533.76px;top:375.00px;font-size:17.33px;color:#484848;font-weight:bold;transform:scaleX(1.0367);transform-origin:0 0">$ 58741</div>
<div class="t" style="left:409.47px;top:395.00px;font-size:13.33px;color:#484848;transform:scaleX(1.0373);transform-origin:0 0">Status :</div>
<div class="t" style="left:459.68px;top:395.00px;font-size:13.33px;color:#f27f22;font-weight:bold;transform:scaleX(1.0335);transform-origin:0 0">Pending Payment</div>
<div class="t" style="left:79.33px;top:371.00px;font-size:11.8px;color:#484848;transform:scaleX(0.9925);transform-origin:0 0">5, Mahatma Gandhi Road,Uk</div>
<div class="t" style="left:80.41px;top:401.00px;font-size:12.9px;color:#484848;transform:scaleX(1.0237);transform-origin:0 0">Youroffice@mail.com</div>
<div class="t" style="left:85.04px;top:439.00px;font-size:12.2px;color:#484848;transform:scaleX(0.9868);transform-origin:0 0">Yourofficeweb.com</div>
<div class="t" style="left:87.90px;top:474.00px;font-size:12.2px;color:#484848;transform:scaleX(0.9716);transform-origin:0 0">123-456-789</div>
<div class="t" style="left:416.27px;top:460.00px;font-size:17.8px;color:#666;transform:scaleX(0.8147);transform-origin:0 0">4</div>
<div class="t" style="left:435.30px;top:460.00px;font-size:17.8px;color:#666;transform:scaleX(0.8898);transform-origin:0 0">6</div>
<div class="t" style="left:447.99px;top:460.00px;font-size:17.8px;color:#666;transform:scaleX(0.8824);transform-origin:0 0">0</div>
<div class="t" style="left:461.01px;top:460.00px;font-size:17.8px;color:#666;transform:scaleX(0.8660);transform-origin:0 0">7</div>
<div class="t" style="left:475.10px;top:460.00px;font-size:17.8px;color:#666;transform:scaleX(0.8588);transform-origin:0 0">0</div>
<div class="t" style="left:489.43px;top:460.00px;font-size:17.8px;color:#666;transform:scaleX(0.6392);transform-origin:0 0">1</div>
<div class="t" style="left:502.66px;top:460.00px;font-size:17.8px;color:#666;transform:scaleX(0.8370);transform-origin:0 0">4</div>
<div class="t" style="left:522.40px;top:460.00px;font-size:17.8px;color:#666;transform:scaleX(0.8588);transform-origin:0 0">0</div>
<div class="t" style="left:535.41px;top:460.00px;font-size:17.8px;color:#666;transform:scaleX(0.8303);transform-origin:0 0">5</div>
<div class="t" style="left:547.35px;top:460.00px;font-size:17.8px;color:#666;transform:scaleX(0.9279);transform-origin:0 0">7</div>
<div class="t" style="left:562.00px;top:460.00px;font-size:17.8px;color:#666;transform:scaleX(0.8588);transform-origin:0 0">0</div>
<div class="t" style="left:576.87px;top:460.00px;font-size:17.8px;color:#666;transform:scaleX(0.6131);transform-origin:0 0">1</div>
<div class="t" style="left:45.31px;top:523.00px;font-size:14.5px;color:#fff;font-weight:bold;transform:scaleX(1.0211);transform-origin:0 0">Item Description</div>
<div class="t" style="left:245.79px;top:521.00px;font-size:14.5px;color:#fff;font-weight:bold;transform:scaleX(1.0286);transform-origin:0 0">Quantity</div>
<div class="t" style="left:377.43px;top:522.00px;font-size:14.5px;color:#fff;font-weight:bold;transform:scaleX(1.0012);transform-origin:0 0">Unit Price</div>
<div class="t" style="left:557.83px;top:520.00px;font-size:14.5px;color:#fff;font-weight:bold;transform:scaleX(1.0255);transform-origin:0 0">Total</div>
<div class="t" style="left:72.18px;top:562.00px;font-size:12.4px;color:#f27f22;transform:scaleX(1.0619);transform-origin:0 0">Item Description</div>
<div class="t" style="left:274.07px;top:562.00px;font-size:12.4px;color:#f27f22;transform:scaleX(0.9170);transform-origin:0 0">3</div>
<div class="t" style="left:409.86px;top:562.00px;font-size:12.4px;color:#f27f22;transform:scaleX(1.0254);transform-origin:0 0">$270.00</div>
<div class="t" style="left:559.86px;top:562.00px;font-size:12.4px;color:#f27f22;transform:scaleX(1.0311);transform-origin:0 0">$2,400.00</div>
<div class="t" style="left:72.18px;top:602.00px;font-size:12.4px;color:#f27f22;transform:scaleX(1.0619);transform-origin:0 0">Item Description</div>
<div class="t" style="left:274.25px;top:602.00px;font-size:12.4px;color:#f27f22;transform:scaleX(0.8628);transform-origin:0 0">4</div>
<div class="t" style="left:409.86px;top:602.00px;font-size:12.4px;color:#f27f22;transform:scaleX(1.0254);transform-origin:0 0">$271.00</div>
<div class="t" style="left:559.86px;top:602.00px;font-size:12.4px;color:#f27f22;transform:scaleX(1.0311);transform-origin:0 0">$2,401.00</div>
<div class="t" style="left:72.18px;top:642.00px;font-size:12.4px;color:#f27f22;transform:scaleX(1.0619);transform-origin:0 0">Item Description</div>
<div class="t" style="left:274.04px;top:642.00px;font-size:12.4px;color:#f27f22;transform:scaleX(0.9170);transform-origin:0 0">5</div>
<div class="t" style="left:409.86px;top:642.00px;font-size:12.4px;color:#f27f22;transform:scaleX(1.0254);transform-origin:0 0">$272.00</div>
<div class="t" style="left:559.86px;top:642.00px;font-size:12.4px;color:#f27f22;transform:scaleX(1.0311);transform-origin:0 0">$2,402.00</div>
<div class="a" style="left:964px;top:326px;width:66px;height:23px;border:2px solid #217346"></div>
<div class="a" style="left:1025px;top:344px;width:7px;height:7px;background:#217346;border:1px solid #fff"></div>
<div class="a" style="left:0;top:678px;width:1093px;height:28px;background:#f3f3f3;border-top:1px solid #ababab"></div>
<div class="a" style="left:100px;top:678px;width:65px;height:25px;background:#fff;border-left:1px solid #ababab;border-right:1px solid #ababab;border-bottom:2px solid #217346"></div>
<div class="t" id="sheet1" style="left:132.5px;top:686px;font-size:12.5px;font-weight:bold;color:#217346;transform:translateX(-50%)">Sheet1</div>
<svg style="left:0;top:678px" width="1093" height="28"><polygon points="27,13.5 31,9.5 31,17.5" fill="#c3c3c3"/><polygon points="60,13.5 56,9.5 56,17.5" fill="#c3c3c3"/><circle cx="206" cy="14" r="6.7" fill="none" stroke="#6a6a6a" stroke-width="1.2"/><path d="M202 14h8M206 10v8" stroke="#555" stroke-width="1.6" fill="none"/>
<circle cx="819.5" cy="9" r="0.9" fill="#999"/><circle cx="819.5" cy="13.5" r="0.9" fill="#999"/><circle cx="819.5" cy="18" r="0.9" fill="#999"/></svg>
<div class="a" style="left:836px;top:685px;width:260px;height:15px;background:#fff;border:1px solid #ababab"></div>
<div class="a" style="left:836px;top:685px;width:15px;height:15px;background:#fff;border:1px solid #ababab"></div>
<svg style="left:836px;top:685px" width="15" height="15"><polygon points="5,7.5 9.5,4 9.5,11" fill="#555"/></svg>
<div class="a" style="left:0;top:706px;width:1093px;height:22px;background:#217346"></div>
<div class="a" style="left:1080px;top:706px;width:13px;height:22px;background:#0e5c2f"></div>
<div class="a" style="left:1091.5px;top:710px;width:2px;height:13px;background:#fff"></div>
<div class="t" id="ready" style="left:8px;top:712px;font-size:11px;color:#fff;letter-spacing:-0.9px">READY</div>
<div class="a" style="left:0;top:728px;width:1093px;height:4px;background:linear-gradient(#6f8fae,#b4cbe4 40%,#c3d6ea)"></div>
<div class="a" style="left:121px;top:728px;width:51px;height:4px;background:#e9eef4;border:1px solid #555;border-bottom:0;border-radius:2px 2px 0 0"></div>
<div class="a" style="left:245px;top:728px;width:59px;height:4px;background:#e9eef4;border:1px solid #555;border-bottom:0;border-radius:2px 2px 0 0"></div>
<div class="a" style="left:307px;top:728px;width:59px;height:4px;background:#e9eef4;border:1px solid #555;border-bottom:0;border-radius:2px 2px 0 0"></div>
<div class="a" style="left:369px;top:728px;width:59px;height:4px;background:#e9eef4;border:1px solid #555;border-bottom:0;border-radius:2px 2px 0 0"></div>
<div class="a" style="left:431px;top:728px;width:59px;height:4px;background:#e9eef4;border:1px solid #555;border-bottom:0;border-radius:2px 2px 0 0"></div>
<svg style="left:0;top:728px" width="60" height="4" viewBox="0 728 60 4" id="startorb"><ellipse cx="22" cy="735" rx="9" ry="6.4" fill="#dfe9f3" stroke="#3c5a78" stroke-width="1"/></svg>
<div class="a" style="left:0;top:728px;width:1093px;height:1px;background:rgba(40,60,80,0.45)"></div>
</div></body></html>
